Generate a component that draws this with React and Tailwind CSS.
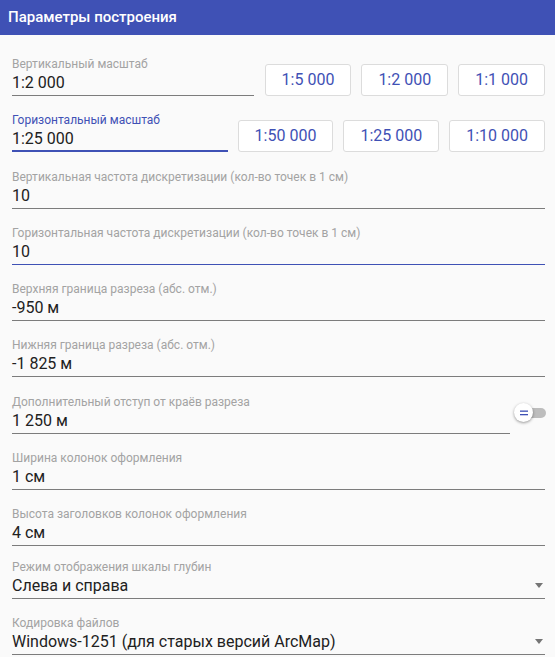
import React from "react";

const Field = ({ label, value, focused, hover, className = "" }) => (
  <div className={`flex flex-col h-10 ${className}`}>
    <div className={`text-xs leading-4 ${focused ? "text-[#3f51b5]" : "text-[#a3a3a3]"}`}>{label}</div>
    <div
      className={`text-base leading-[22px] text-[#212121] ${
        focused
          ? "border-b-2 border-[#3f51b5]"
          : hover
          ? "pb-[1px] border-b border-[#3f51b5]"
          : "pb-[1px] border-b border-[#7c7c7c]"
      }`}
    >
      {value}
    </div>
  </div>
);

const SelectField = ({ label, value, className = "" }) => (
  <div className={`flex flex-col h-10 ${className}`}>
    <div className="text-xs leading-4 text-[#a3a3a3]">{label}</div>
    <div className="flex items-center justify-between text-base leading-[22px] text-[#212121] pb-[1px] border-b border-[#7c7c7c]">
      <span>{value}</span>
      <span className="mr-[2px] w-0 h-0 border-l-4 border-r-4 border-t-[5px] border-l-transparent border-r-transparent border-t-[#757575]"></span>
    </div>
  </div>
);

const ScaleButton = ({ children }) => (
  <button className="h-8 px-4 ml-[10px] rounded-[3px] border border-[#dcdcdc] bg-white text-base text-[#3f51b5] leading-none">
    {children}
  </button>
);

export default function App() {
  return (
    <div className="h-[657px] overflow-hidden bg-[#fafafa]" style={{ fontFamily: "Roboto, 'Noto Sans', sans-serif" }}>
      {/* HEADER */}
      <div className="h-[35px] bg-[#3f51b5] flex items-center px-2">
        <h1 className="text-[15px] font-medium text-white">Параметры построения</h1>
      </div>

      <div className="pl-3 pr-[10px] pt-[21px] flex flex-col gap-[16.3px]">
        {/* SCALES */}
        <div className="flex items-end">
          <Field className="flex-1" label="Вертикальный масштаб" value="1:2 000" />
          <div className="w-[1px]"></div>
          <ScaleButton>1:5 000</ScaleButton>
          <ScaleButton>1:2 000</ScaleButton>
          <ScaleButton>1:1 000</ScaleButton>
        </div>
        <div className="flex items-end">
          <Field className="flex-1" label="Горизонтальный масштаб" value="1:25 000" focused />
          <ScaleButton>1:50 000</ScaleButton>
          <ScaleButton>1:25 000</ScaleButton>
          <ScaleButton>1:10 000</ScaleButton>
        </div>

        <Field label="Вертикальная частота дискретизации (кол-во точек в 1 см)" value="10" />
        <Field label="Горизонтальная частота дискретизации (кол-во точек в 1 см)" value="10" hover />
        <Field label="Верхняя граница разреза (абс. отм.)" value="-950 м" />
        <Field label="Нижняя граница разреза (абс. отм.)" value="-1 825 м" />

        <div className="flex items-center">
          <Field className="flex-1" label="Дополнительный отступ от краёв разреза" value="1 250 м" />
          <div className="relative w-[32px] h-5 ml-[4px] mr-[-1px] mb-[2px] flex items-center">
            <div className="absolute left-[10px] right-0 h-[10px] rounded-full bg-[#bdbdbd]"></div>
            <div className="absolute left-0 w-[19px] h-[19px] rounded-full bg-white shadow-[0_1px_3px_rgba(0,0,0,0.4)] flex items-center justify-center">
              <svg width="8" height="6" viewBox="0 0 8 6">
                <rect x="0" y="0.5" width="8" height="1.3" fill="#3f51b5" />
                <rect x="0" y="4" width="8" height="1.3" fill="#3f51b5" />
              </svg>
            </div>
          </div>
        </div>

        <Field label="Ширина колонок оформления" value="1 см" />
        <Field label="Высота заголовков колонок оформления" value="4 см" />
        <SelectField className="-mt-[4px]" label="Режим отображения шкалы глубин" value="Слева и справа" />
        <SelectField label="Кодировка файлов" value="Windows-1251 (для старых версий ArcMap)" />
      </div>
    </div>
  );
}
